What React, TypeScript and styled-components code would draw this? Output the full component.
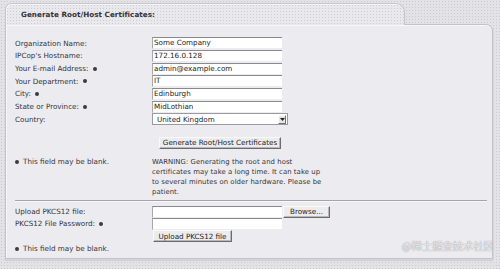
import React from "react";
import styled, { createGlobalStyle } from "styled-components";

const GlobalStyle = createGlobalStyle`
  html, body { margin: 0; padding: 0; }
  body { background: #e2e2e6; font-family: "DejaVu Sans", Verdana, sans-serif; }
`;

const dots = `
  background-image: radial-gradient(rgba(170,170,185,0.45) 0.55px, transparent 0.8px);
  background-size: 3px 3px;
`;

const Page = styled.div`
  position: relative;
  width: 500px;
  height: 269px;
  box-sizing: border-box;
  padding: 3px 7px 0 5px;
  background-color: #e3e3e7;
  ${dots}
  overflow: hidden;
`;

const Panel = styled.div`
  display: flex;
  flex-direction: column;
  align-items: flex-start;
`;

const Tab = styled.div`
  position: relative;
  z-index: 1;
  width: 400px;
  height: 22px;
  box-sizing: border-box;
  margin-bottom: -1px;
  padding: 0 0 0 15px;
  display: flex;
  align-items: center;
  background-color: #e9e9ed;
  ${dots}
  border: 1px solid #c6c6cc;
  border-bottom: none;
  border-radius: 6px 9px 0 0;
  box-shadow: inset 1px 1px 0 #f6f6f8;
`;

const Title = styled.h1`
  margin: 0;
  font-size: 7.2px;
  font-weight: bold;
  color: #333338;
  letter-spacing: 0.05px;
`;

const Body = styled.div`
  width: 488px;
  height: 235px;
  box-sizing: border-box;
  background: #ececf0;
  border: 1px solid #c2c2c8;
  border-top-right-radius: 7px;
  box-shadow: inset 1px 1px 0 #f7f7f9, 1px 1px 0 #d6d6da, 0 2px 0 #cfcfd4;
  padding: 12px 6px 0 9px;
  display: flex;
  flex-direction: column;
`;

const Grid = styled.div<{ $row?: number }>`
  display: grid;
  grid-template-columns: 137px 1fr;
  grid-auto-rows: ${(p) => p.$row ?? 12.67}px;
  align-items: center;
`;

const Label = styled.div`
  font-size: 7.2px;
  color: #333338;
  display: flex;
  align-items: center;
  white-space: nowrap;
`;

const Bullet = styled.span<{ $after?: boolean }>`
  display: inline-block;
  flex: none;
  width: 4px;
  height: 4px;
  border-radius: 50%;
  background: #3a3a40;
  margin: ${(p) => (p.$after ? "0 0 0 4px" : "0 4px 0 0")};
`;

const Field = styled.div`
  display: flex;
  align-items: center;
  gap: 1px;
`;

const Input = styled.div`
  width: 130px;
  height: 12px;
  box-sizing: border-box;
  background: #fff;
  border-top: 1px solid #8a8a8e;
  border-left: 1px solid #a8a8ac;
  border-bottom: 1px solid #ececf0;
  font-size: 7.2px;
  color: #222;
  padding: 0 0 0 1px;
  line-height: 10px;
  white-space: nowrap;
`;

const Select = styled.div`
  width: 136px;
  height: 12px;
  box-sizing: border-box;
  background: #fff;
  border: 1px solid #9a9aa0;
  display: flex;
  align-items: center;
  justify-content: space-between;
  font-size: 7.2px;
  color: #222;
  padding-left: 4px;
`;

const Arrow = styled.span`
  width: 8px;
  height: 9px;
  margin-right: 1px;
  box-sizing: border-box;
  border: 1px solid;
  border-color: #fff #707074 #707074 #fff;
  background: #e6e6ea;
  display: flex;
  align-items: center;
  justify-content: center;
`;

const Button = styled.div<{ $w: number }>`
  width: ${(p) => p.$w}px;
  height: 12px;
  flex: none;
  box-sizing: border-box;
  background: #ececee;
  border: 1px solid;
  border-color: #fafafa #6c6c70 #6c6c70 #fafafa;
  box-shadow: inset -1px -1px 0 #b8b8bc;
  font-size: 7.2px;
  color: #222;
  display: flex;
  align-items: center;
  justify-content: center;
  white-space: nowrap;
`;

const ButtonRow = styled.div`
  padding-left: 144px;
  margin-top: 11px;
  display: flex;
`;

const InfoRow = styled.div`
  display: grid;
  grid-template-columns: 137px 1fr;
  align-items: start;
  margin-top: 8px;
  font-size: 7.2px;
  line-height: 10px;
  color: #333338;
`;

const Warning = styled.p`
  margin: 0;
  font-size: 6.9px;
  line-height: 10px;
  letter-spacing: 0.05px;
  white-space: nowrap;
`;

const Divider = styled.hr`
  width: 472px;
  margin: 3px 0 0 0;
  border: none;
  border-top: 1px solid #a4a4aa;
  border-bottom: 1px solid #f8f8fa;
`;

const UploadGrid = styled(Grid)`
  margin-top: 4px;
`;

const UploadButtonCell = styled.div`
  grid-column: 2;
  padding-left: 1px;
  display: flex;
  margin-top: 1px;
`;

const Blank = styled.div`
  font-size: 7.2px;
  color: #333338;
  display: flex;
  align-items: center;
  margin-top: 2px;
  height: 10px;
`;

const Watermark = styled.div`
  position: absolute;
  right: 6px;
  bottom: 16px;
  font-family: "Noto Sans CJK SC", sans-serif;
  font-size: 10.5px;
  color: rgba(255, 255, 255, 0.85);
  text-shadow: 0 0 1px rgba(90, 90, 100, 0.9);
  letter-spacing: -0.2px;
`;

const rows: { label: string; value: string; opt?: boolean }[] = [
  { label: "Organization Name:", value: "Some Company" },
  { label: "IPCop's Hostname:", value: "172.16.0.128" },
  { label: "Your E-mail Address:", value: "admin@example.com", opt: true },
  { label: "Your Department:", value: "IT", opt: true },
  { label: "City:", value: "Edinburgh", opt: true },
  { label: "State or Province:", value: "MidLothian", opt: true },
];

export default function App() {
  return (
    <>
      <GlobalStyle />
      <Page>
        <Panel>
          <Tab>
            <Title>Generate Root/Host Certificates:</Title>
          </Tab>
          <Body>
            <Grid>
              {rows.map((r) => (
                <React.Fragment key={r.label}>
                  <Label>
                    {r.label}
                    {r.opt && <Bullet $after />}
                  </Label>
                  <Field>
                    <Input>{r.value}</Input>
                  </Field>
                </React.Fragment>
              ))}
              <Label>Country:</Label>
              <Field>
                <Select>
                  United Kingdom
                  <Arrow>
                    <svg width="5" height="3" viewBox="0 0 5 3">
                      <path d="M0 0h5L2.5 3z" fill="#222" />
                    </svg>
                  </Arrow>
                </Select>
              </Field>
            </Grid>
            <ButtonRow>
              <Button $w={122}>Generate Root/Host Certificates</Button>
            </ButtonRow>
            <InfoRow>
              <Label>
                <Bullet />
                This field may be blank.
              </Label>
              <Warning>
                WARNING: Generating the root and host
                <br />
                certificates may take a long time. It can take up
                <br />
                to several minutes on older hardware. Please be
                <br />
                patient.
              </Warning>
            </InfoRow>
            <Divider />
            <UploadGrid $row={12}>
              <Label>Upload PKCS12 file:</Label>
              <Field>
                <Input />
                <Button $w={47}>Browse...</Button>
              </Field>
              <Label>
                PKCS12 File Password:
                <Bullet $after />
              </Label>
              <Field>
                <Input />
              </Field>
              <UploadButtonCell>
                <Button $w={79}>Upload PKCS12 file</Button>
              </UploadButtonCell>
            </UploadGrid>
            <Blank>
              <Bullet />
              This field may be blank.
            </Blank>
          </Body>
        </Panel>
        <Watermark>@稀土掘金技术社区</Watermark>
      </Page>
    </>
  );
}
